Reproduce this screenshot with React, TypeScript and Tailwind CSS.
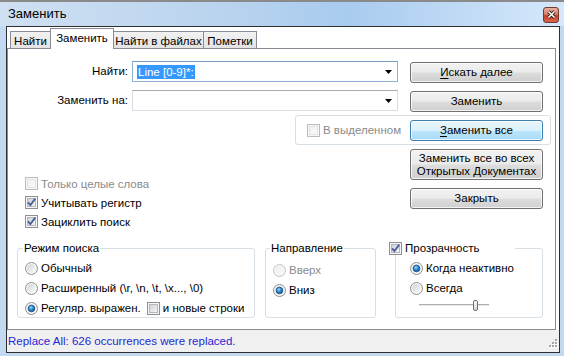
import { useId, type ReactNode } from 'react';

function useSvgId() {
  return 'g' + useId().replace(/[^a-zA-Z0-9]/g, '');
}

function CheckBox({ checked = false, disabled = false }: { checked?: boolean; disabled?: boolean }) {
  const id = useSvgId();
  return (
    <svg width="13" height="13" viewBox="0 0 13 13" className="shrink-0">
      <defs>
        <linearGradient id={id} x1="0" y1="0" x2="1" y2="1">
          <stop offset="0" stopColor={disabled ? '#efefef' : '#cbcfd5'} />
          <stop offset="1" stopColor={disabled ? '#fbfbfb' : '#f7f7f7'} />
        </linearGradient>
      </defs>
      <rect x="0.5" y="0.5" width="12" height="12" fill="#f6f6f6" stroke={disabled ? '#bcbcbc' : '#8e8f8f'} />
      <rect x="2.5" y="2.5" width="8" height="8" fill={`url(#${id})`} stroke={disabled ? '#e3e3e3' : '#b4b8be'} />
      {checked && <path d="M3 6.3 L5.4 9 L10.2 2.6" fill="none" stroke="#4a5f97" strokeWidth="1.8" />}
    </svg>
  );
}

function Radio({ checked = false, disabled = false }: { checked?: boolean; disabled?: boolean }) {
  const id = useSvgId();
  return (
    <svg width="13" height="13" viewBox="0 0 13 13" className="shrink-0">
      <defs>
        <linearGradient id={id + 'b'} x1="0" y1="0" x2="1" y2="1">
          <stop offset="0" stopColor={disabled ? '#eeeeee' : '#cfd2d6'} />
          <stop offset="1" stopColor={disabled ? '#fafafa' : '#fcfcfc'} />
        </linearGradient>
        <radialGradient id={id + 'd'} cx="0.4" cy="0.35" r="0.75">
          <stop offset="0" stopColor="#a6dcff" />
          <stop offset="0.45" stopColor="#2a8ad8" />
          <stop offset="1" stopColor="#104f8c" />
        </radialGradient>
      </defs>
      <circle cx="6.5" cy="6.5" r="6" fill="#f6f6f6" stroke={disabled ? '#c2c2c2' : '#8e8f8f'} />
      <circle cx="6.5" cy="6.5" r="4.4" fill={`url(#${id}b)`} />
      {checked && <circle cx="6.5" cy="6.5" r="3.3" fill={`url(#${id}d)`} stroke="#1d4b7d" strokeWidth="0.8" />}
    </svg>
  );
}

function Button({ children, focused = false, className = '' }: { children: ReactNode; focused?: boolean; className?: string }) {
  return (
    <div
      className={`flex items-center justify-center rounded-[3px] border text-center leading-[13px] text-black shadow-[inset_0_0_0_1px_rgba(255,255,255,0.75)] ${
        focused
          ? 'border-[#3c7fb1] bg-[linear-gradient(#eaf6fd_0%,#d9f0fc_50%,#bee6fd_52%,#a7d9f5_100%)]'
          : 'border-[#707070] bg-[linear-gradient(#f2f2f2_0%,#ebebeb_48%,#dddddd_52%,#cfcfcf_100%)]'
      } ${className}`}
    >
      {children}
    </div>
  );
}

function Combo({ label, focused = false, children }: { label: string; focused?: boolean; children?: ReactNode }) {
  return (
    <div className="flex items-start">
      <div className="w-[120px] pt-[3px] text-right">{label}</div>
      <div
        className={`ml-[4px] flex h-[21px] w-[266px] items-center border bg-white pl-[4px] pr-[5px] ${
          focused ? 'border-[#8fb2d8] border-t-[#7a9cc3]' : 'border-[#dadce3] border-t-[#abadb3]'
        }`}
      >
        <div className="flex-1">{children}</div>
        <svg width="7" height="4" viewBox="0 0 7 4">
          <path d="M0 0 H7 L3.5 4 Z" fill="#000" />
        </svg>
      </div>
    </div>
  );
}

function Check({ label, checked = false, disabled = false }: { label: string; checked?: boolean; disabled?: boolean }) {
  return (
    <div className="flex h-[19px] items-center gap-[3px]">
      <CheckBox checked={checked} disabled={disabled} />
      <span className={disabled ? 'text-[#8a8a8a]' : ''}>{label}</span>
    </div>
  );
}

function Option({ label, checked = false, disabled = false }: { label: ReactNode; checked?: boolean; disabled?: boolean }) {
  return (
    <div className="flex h-[20px] items-center gap-[3px]">
      <Radio checked={checked} disabled={disabled} />
      <span className={disabled ? 'text-[#8a8a8a]' : ''}>{label}</span>
    </div>
  );
}

function Tab({ label, active = false, className = '' }: { label: string; active?: boolean; className?: string }) {
  return active ? (
    <div className={`relative z-10 flex h-[21px] items-center justify-center border border-b-0 border-[#898c95] bg-white pb-[3px] ${className}`}>
      {label}
    </div>
  ) : (
    <div
      className={`mb-[1px] flex h-[17px] items-center justify-center border border-b-0 border-[#898c95] bg-[linear-gradient(#f2f2f2,#e3e3e3)] pt-[1px] ${className}`}
    >
      {label}
    </div>
  );
}

export default function App() {
  return (
    <div className="flex h-[356px] w-[564px] flex-col bg-[#c2d9f1] font-['Liberation_Sans',Arial,sans-serif] text-[11.5px] leading-[14px] text-black">
      <div className="h-[2px] bg-[#8a8a8a]" />
      <div className="flex h-[24px] items-center justify-between bg-[linear-gradient(90deg,#cfe0f2_0%,#b9d3ee_40%,#a8cbef_62%,#d6e8fb_100%)] pl-[8px] pr-[5px]">
        <span className="text-[13px]">Заменить</span>
        <div className="mt-[1px] flex h-[16px] w-[16px] items-center justify-center rounded-[3px] border border-[#6e3a31] bg-[linear-gradient(#eab0a2_0%,#d7806a_45%,#c2412b_55%,#d8684e_100%)]">
          <svg width="9" height="9" viewBox="0 0 9 9">
            <path d="M1.5 1.5 L7.5 7.5 M7.5 1.5 L1.5 7.5" stroke="#3b1a14" strokeWidth="3.2" />
            <path d="M1.5 1.5 L7.5 7.5 M7.5 1.5 L1.5 7.5" stroke="#fff" strokeWidth="1.6" />
          </svg>
        </div>
      </div>

      <div className="mb-[3px] ml-[6px] mr-[4px] flex flex-1 flex-col border border-[#2f2f2f] bg-white">
        <div className="relative z-10 flex h-[22px] items-end pl-[3px]">
          <Tab label="Найти" className="w-[41px]" />
          <Tab label="Заменить" active className="-ml-px w-[64px]" />
          <Tab label="Найти в файлах" className="-ml-px w-[91px]" />
          <Tab label="Пометки" className="-ml-px w-[54px]" />
        </div>

        <div className="-mt-px mr-[3px] flex h-[282px] flex-col border border-[#898c95]">
          {/* find / replace rows */}
          <div className="mt-[12px] flex h-[21px] items-start">
            <Combo label="Найти:" focused>
              <span className="bg-[#3399ff] px-[1px] py-[1px] text-white">Line [0-9]*:</span>
            </Combo>
            <Button className="ml-[12px] mt-[1px] h-[21px] w-[133px] shrink-0">
              <span>
                <u className="underline-offset-2">И</u>скать далее
              </span>
            </Button>
          </div>
          <div className="mt-[8px] flex h-[21px] items-start">
            <Combo label="Заменить на:" />
            <Button className="ml-[12px] mt-[1px] h-[21px] w-[133px] shrink-0">Заменить</Button>
          </div>

          <div className="ml-[287px] mt-[4px] flex h-[30px] w-[256px] items-center justify-between rounded-[3px] border border-[#d5dfe5] pl-[11px] pr-[7px]">
            <Check label="В выделенном" disabled />
            <Button focused className="h-[21px] w-[133px]">
              <span>
                <u className="underline-offset-2">З</u>аменить все
              </span>
            </Button>
          </div>

          <div className="mt-[4px] flex">
            <div className="flex-1 pl-[17px] pt-[25px]">
              <Check label="Только целые слова" disabled />
              <Check label="Учитывать регистр" checked />
              <Check label="Зациклить поиск" checked />
            </div>
            <div className="mr-[12px] flex w-[133px] flex-col">
              <Button className="h-[31px]">
                Заменить все во всех
                <br />
                Открытых Документах
              </Button>
              <Button className="mt-[8px] h-[21px]">Закрыть</Button>
            </div>
          </div>

          <div className="mt-[10px] flex">
            <fieldset className="ml-[9px] h-[77px] w-[238px] rounded-[3px] border border-[#d5dfe5] pl-[7px] pt-[3px]">
              <legend className="ml-[-2px] px-[1px]">Режим поиска</legend>
              <Option label="Обычный" />
              <Option label="Расширенный (\r, \n, \t, \x..., \0)" />
              <div className="flex items-center">
                <Option label="Регуляр. выражен." checked />
                <div className="ml-[6px]">
                  <Check label="и новые строки" />
                </div>
              </div>
            </fieldset>

            <fieldset className="ml-[10px] h-[77px] w-[111px] rounded-[3px] border border-[#d5dfe5] pl-[7px] pt-[5px]">
              <legend className="ml-[-3px] px-[1px]">Направление</legend>
              <Option label="Вверх" disabled />
              <Option label="Вниз" checked />
            </fieldset>

            <fieldset className="ml-[19px] h-[77px] w-[148px] rounded-[3px] border border-[#d5dfe5] pl-[14px] pt-[3px]">
              <legend className="ml-[-21px] pr-[35px]">
                <span className="flex items-center gap-[3px] bg-white">
                  <CheckBox checked />
                  Прозрачность
                </span>
              </legend>
              <Option label="Когда неактивно" checked />
              <Option label="Всегда" />
              <div className="ml-[9px] flex h-[14px] w-[70px] items-center">
                <div className="h-[3px] w-[54px] border-y border-t-[#b0b0b0] border-b-white bg-[#e6e6e6]" />
                <div className="h-[11px] w-[5px] rounded-[2px] border border-[#707070] bg-[linear-gradient(#fbfbfb,#d6d6d6)]" />
                <div className="h-[3px] flex-1 border-y border-t-[#b0b0b0] border-b-white bg-[#e6e6e6]" />
              </div>
            </fieldset>
          </div>
        </div>

        <div className="flex h-[22px] items-center justify-between bg-[#f0f0f0] pl-[1px] text-[#2626d4]">
          <span>Replace All: 626 occurrences were replaced.</span>
          <svg width="11" height="11" viewBox="0 0 11 11" className="mr-[1px] mt-[9px] self-start">
            {[
              [8, 0],
              [5, 3],
              [8, 3],
              [2, 6],
              [5, 6],
              [8, 6],
            ].map(([x, y]) => (
              <g key={`${x}-${y}`}>
                <rect x={x + 1} y={y + 1} width="2" height="2" fill="#fff" />
                <rect x={x} y={y} width="2" height="2" fill="#a7a7a7" />
              </g>
            ))}
          </svg>
        </div>
      </div>
    </div>
  );
}
